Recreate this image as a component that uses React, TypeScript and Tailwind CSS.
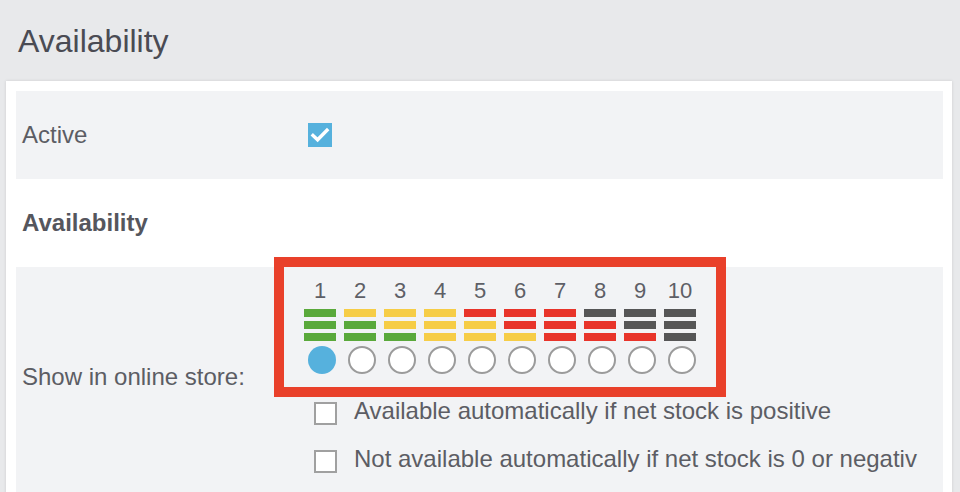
const font = { fontFamily: '"Liberation Sans", Arial, Helvetica, sans-serif' };

type Tone = "g" | "y" | "r" | "d";

const toneClass: Record<Tone, string> = {
  g: "bg-[#5aa93b]",
  y: "bg-[#f6cd46]",
  r: "bg-[#e8342a]",
  d: "bg-[#565656]",
};

// top, middle, bottom bar for each level
const levels: Tone[][] = [
  ["g", "g", "g"],
  ["y", "g", "g"],
  ["y", "y", "g"],
  ["y", "y", "y"],
  ["r", "y", "y"],
  ["r", "r", "y"],
  ["r", "r", "r"],
  ["d", "r", "r"],
  ["d", "d", "r"],
  ["d", "d", "d"],
];

function Level({ n, bars, selected }: { n: number; bars: Tone[]; selected: boolean }) {
  return (
    <div className="flex w-[32px] flex-col items-center">
      <span className="text-[22px] leading-[21px] text-[#5e5f66]">{n}</span>
      <div className="mt-2 flex w-full flex-col gap-1">
        {bars.map((t, i) => (
          <div key={i} className={`h-[8px] w-full ${toneClass[t]}`} />
        ))}
      </div>
      <div
        className={`ml-[4px] mt-[5px] h-[28px] w-[28px] rounded-full ${
          selected ? "bg-[#56b1dd]" : "border-2 border-[#9b9b9b] bg-white"
        }`}
      />
    </div>
  );
}

function Box({ label }: { label: string }) {
  return (
    <div className="flex items-start gap-[17px]">
      <div className="h-[23px] w-[23px] shrink-0 border-2 border-[#a0a0a0] bg-white" />
      <span className="-mt-[3px] whitespace-nowrap text-[24px] leading-[24px] text-[#5c5d64]">{label}</span>
    </div>
  );
}

export default function App() {
  const current = 1;

  return (
    <div className="h-[492px] w-[960px] overflow-hidden bg-[#e8e9eb]" style={font}>
      <div className="h-[81px] pl-[18px] pt-[25px]">
        <h1 className="text-[32px] leading-[32px] text-[#4a4b53]">Availability</h1>
      </div>

      <div className="ml-[6px] w-[946px] bg-white pl-[10px] pr-[9px] pt-[10px] shadow-[0_0_3px_rgba(0,0,0,0.12)]">
        {/* Active */}
        <div className="flex h-[88px] items-center bg-[#f2f3f5] pl-[6px]">
          <span className="w-[252px] text-[24px] leading-[24px] text-[#5c5d64]">Active</span>
          <div className="ml-[34px] flex h-[24px] w-[24px] items-center justify-center bg-[#56b1dd]">
            <svg width="24" height="24" viewBox="0 0 24 24" fill="none">
              <path d="M5 12.5L9.6 16.8L19 7.2" stroke="white" strokeWidth="3.4" strokeLinecap="square" />
            </svg>
          </div>
        </div>

        {/* Section title */}
        <div className="flex h-[88px] items-center pl-[6px]">
          <span className="text-[24px] font-bold leading-[24px] text-[#55565d]">Availability</span>
        </div>

        {/* Show in online store */}
        <div className="flex items-start bg-[#f2f3f5] pb-[40px] pl-[6px]">
          <span className="mt-[98px] w-[252px] text-[24px] leading-[24px] text-[#5c5d64]">
            Show in online store:
          </span>

          <div className="flex flex-col items-start">
            <div className="-mt-[10px] flex gap-2 border-[10px] border-[#e9402a] px-[20px] py-[13px]">
              {levels.map((bars, i) => (
                <Level key={i} n={i + 1} bars={bars} selected={i + 1 === current} />
              ))}
            </div>

            <div className="ml-[40px] mt-[5px] flex flex-col gap-[25px]">
              <Box label="Available automatically if net stock is positive" />
              <Box label="Not available automatically if net stock is 0 or negativ" />
            </div>
          </div>
        </div>
      </div>
    </div>
  );
}
